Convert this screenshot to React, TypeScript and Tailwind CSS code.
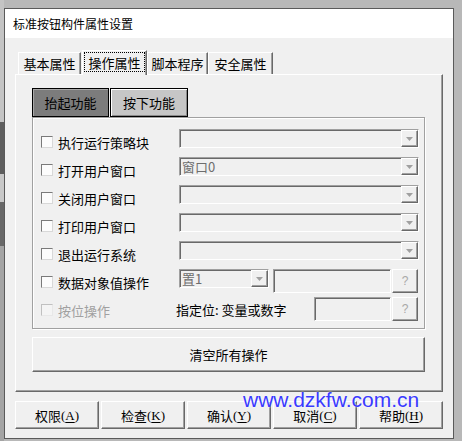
import React from "react";

const raised =
  "border border-t-white border-l-white border-r-[#696969] border-b-[#696969] shadow-[inset_-1px_-1px_0_#a0a0a0]";
const sunken =
  "border border-t-[#a0a0a0] border-l-[#a0a0a0] border-r-white border-b-white shadow-[inset_1px_1px_0_#696969]";

function Arrow() {
  return (
    <div className={`w-[17px] h-full flex items-center justify-center bg-[#f0f0f0] ${raised}`}>
      <svg width="7" height="4" viewBox="0 0 7 4">
        <path d="M0 0H7L3.5 4Z" fill="#a0a0a0" />
      </svg>
    </div>
  );
}

function Combo({ w, text }: { w: string; text?: string }) {
  return (
    <div className={`${w} h-[19px] flex bg-[#f0f0f0] ${sunken}`}>
      <div className="flex-1 pl-[2px] flex items-center text-[13px] leading-none text-[#6d6d6d]">
        {text}
      </div>
      <Arrow />
    </div>
  );
}

function Check({ disabled }: { disabled?: boolean }) {
  return (
    <div
      className={`w-[12px] h-[12px] border ${
        disabled
          ? "border-t-[#c0c0c0] border-l-[#c0c0c0] border-r-[#e8e8e8] border-b-[#e8e8e8] bg-[#f4f4f4]"
          : "border-t-[#7a7a7a] border-l-[#7a7a7a] border-r-[#d8d8d8] border-b-[#d8d8d8] bg-[#fcfcfc]"
      }`}
    />
  );
}

function Row({ label, combo }: { label: string; combo?: React.ReactNode }) {
  return (
    <div className="flex items-start h-[28px] pl-[8px]">
      <div className="w-[138px] flex items-center mt-[7px] h-[12px]">
        <Check />
        <span className="ml-[5px] text-[13px] leading-[13px] text-black whitespace-nowrap">{label}</span>
      </div>
      {combo ?? <Combo w="w-[240px]" />}
    </div>
  );
}

function QBtn() {
  return (
    <div className={`w-[26px] h-[24px] ml-[1px] bg-[#f0f0f0] flex items-center justify-center text-[12px] text-[#a8a8a8] font-['Liberation_Sans',sans-serif] ${raised}`}>
      ?
    </div>
  );
}

function Tab({ label, w, selected }: { label: string; w: string; selected?: boolean }) {
  if (selected) {
    return (
      <div className={`${w} h-[25px] -mb-[1px] relative z-10 bg-[#f0f0f0] border-t border-l border-r border-t-white border-l-white border-r-[#696969] shadow-[inset_-1px_0_0_#a0a0a0] pt-[1px] px-[1px]`}>
        <div className="h-[20px] border border-dotted border-black flex items-center justify-center text-[13px] leading-none text-black">
          {label}
        </div>
      </div>
    );
  }
  return (
    <div className={`${w} h-[22px] bg-[#f0f0f0] border-t border-l border-r border-t-white border-l-white border-r-[#696969] shadow-[inset_-1px_0_0_#a0a0a0] flex items-center justify-center text-[13px] leading-none text-black`}>
      {label}
    </div>
  );
}

function BottomBtn({ cn, key2 }: { cn: string; key2: string }) {
  return (
    <div className={`w-[84px] h-[28px] bg-[#f0f0f0] flex items-center justify-center text-[13px] leading-none text-black ${raised}`}>
      <span>{cn}</span>
      <span className="font-['Liberation_Serif',serif] text-[13px]">
        (<span className="underline underline-offset-2">{key2}</span>)
      </span>
    </div>
  );
}

export default function App() {
  return (
    <div className="w-[462px] h-[441px] bg-[#b8b8b8] flex relative overflow-hidden font-['Noto_Sans_CJK_SC',sans-serif]">
      <div className="w-[4px] flex flex-col">
        <div className="h-[122px] bg-[#c4c4c4]" />
        <div className="h-[52px] bg-[#5e5e5e]" />
        <div className="h-[28px] bg-[#c8c8c8]" />
        <div className="h-[44px] bg-[#686868]" />
        <div className="flex-1 bg-[#a4a4a4]" />
      </div>
      <div className="pt-[8px]">
        <div className="w-[450px] h-[431px] border border-[#5a5a5a] flex flex-col bg-[#f0f0f0]">
          <div className="h-[29px] bg-white pl-[8px] flex items-center text-[12px] leading-none text-black">
            标准按钮构件属性设置
          </div>
          <div className="px-[10px] pt-[12px] flex flex-col">
            <div className="flex items-end h-[24px] pl-[3px]">
              <Tab label="基本属性" w="w-[63px]" />
              <div className="w-[1px]" />
              <Tab label="操作属性" w="w-[65px]" selected />
              <Tab label="脚本程序" w="w-[61px]" />
              <Tab label="安全属性" w="w-[65px]" />
            </div>
            <div className={`h-[318px] ${raised} pl-[16px] pt-[13px] flex flex-col`}>
              <div className="flex h-[29px]">
                <div className="w-[77px] h-[29px] bg-[#7c7c7c] border border-black shadow-[inset_1px_1px_0_#a8a8a8] flex items-center justify-center text-[13px] leading-none text-black">
                  抬起功能
                </div>
                <div className="w-[78px] h-[29px] ml-[1px] bg-[#c6c6c6] border border-black shadow-[inset_1px_1px_0_#ffffff,inset_-1px_-1px_0_#8a8a8a] flex items-center justify-center text-[13px] leading-none text-black">
                  按下功能
                </div>
              </div>
              <div className="w-[393px] h-[212px] border border-[#a0a0a0] shadow-[1px_1px_0_#ffffff,inset_1px_1px_0_#ffffff] pt-[11px] flex flex-col">
                <Row label="执行运行策略块" />
                <Row label="打开用户窗口" combo={<Combo w="w-[240px]" text="窗口0" />} />
                <Row label="关闭用户窗口" />
                <Row label="打印用户窗口" />
                <Row label="退出运行系统" />
                <Row
                  label="数据对象值操作"
                  combo={
                    <div className="flex items-start">
                      <Combo w="w-[90px]" text="置1" />
                      <div className={`w-[118px] h-[24px] ml-[4px] bg-[#f0f0f0] ${sunken}`} />
                      <QBtn />
                    </div>
                  }
                />
                <div className="flex items-start h-[24px] pl-[8px]">
                  <div className="w-[135px] flex items-center mt-[7px] h-[12px]">
                    <Check disabled />
                    <span className="ml-[5px] text-[13px] leading-[13px] text-[#a0a0a0]">按位操作</span>
                  </div>
                  <div className="w-[138px] h-[24px] flex items-center text-[13px] leading-none text-black whitespace-nowrap">
                    指定位: 变量或数字
                  </div>
                  <div className={`w-[77px] h-[24px] bg-[#f0f0f0] ${sunken}`} />
                  <QBtn />
                </div>
              </div>
              <div className={`w-[393px] h-[35px] mt-[8px] bg-[#f0f0f0] ${raised} flex items-center justify-center text-[13px] leading-none text-black`}>
                清空所有操作
              </div>
            </div>
            <div className="pt-[9px] flex justify-between w-[428px]">
              <BottomBtn cn="权限" key2="A" />
              <BottomBtn cn="检查" key2="K" />
              <BottomBtn cn="确认" key2="Y" />
              <BottomBtn cn="取消" key2="C" />
              <BottomBtn cn="帮助" key2="H" />
            </div>
          </div>
        </div>
      </div>
      <div className="absolute left-[243px] top-[389px] text-[21px] leading-none text-[#3a3aff] font-['Liberation_Sans',sans-serif] [text-shadow:0_0_2px_#ffffff] whitespace-nowrap">
        www.dzkfw.com.cn
      </div>
    </div>
  );
}
